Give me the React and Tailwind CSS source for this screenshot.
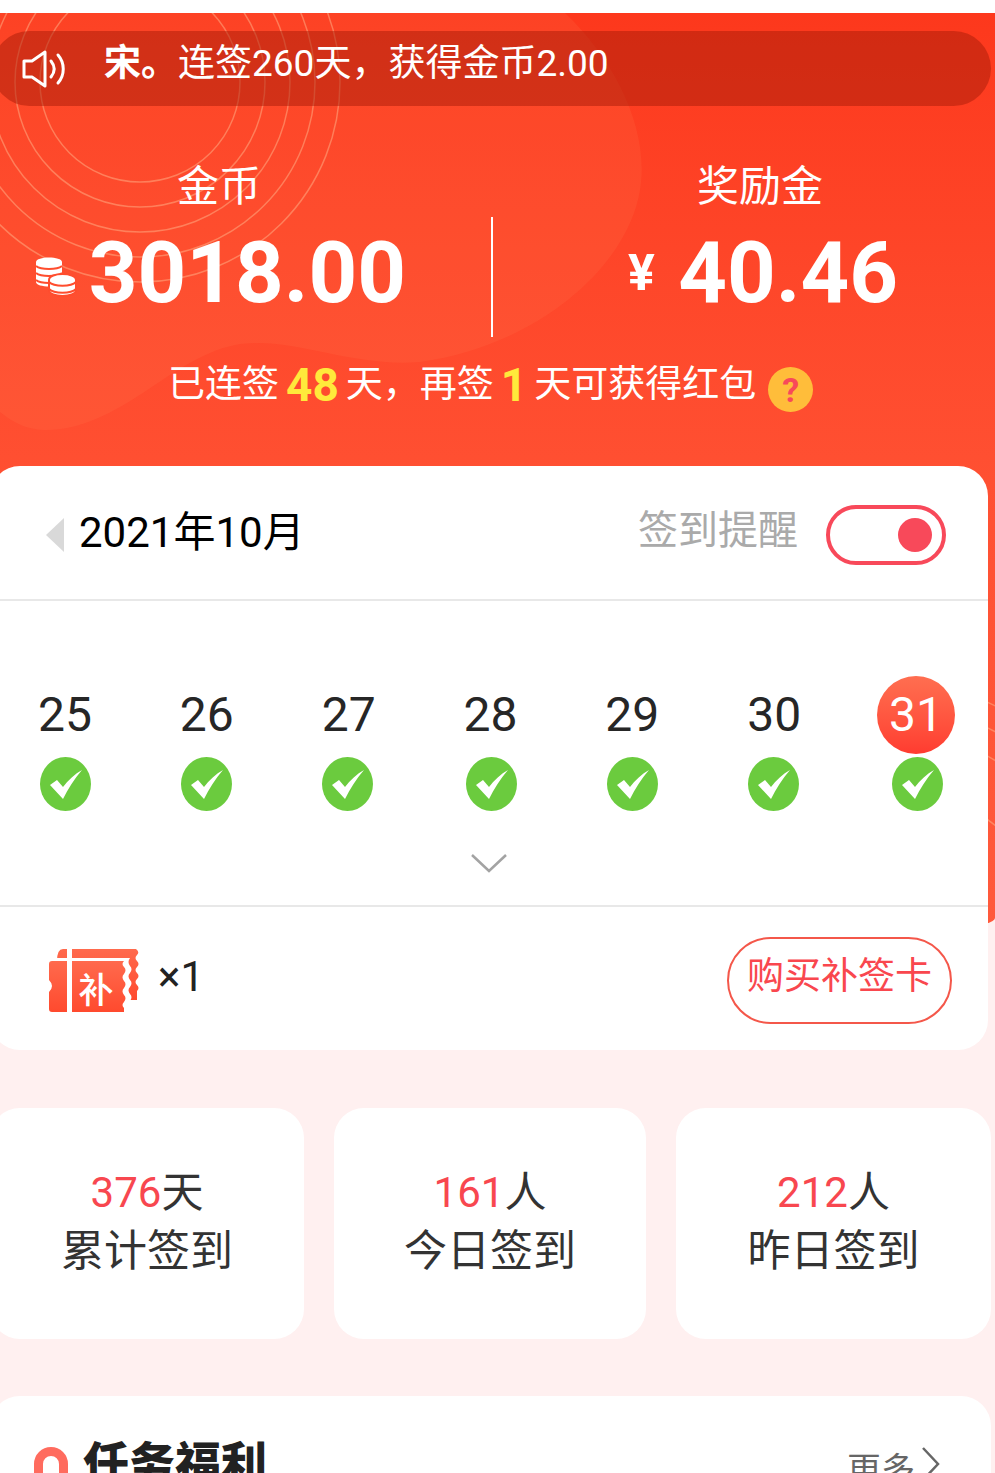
import React from 'react';

const days = [
    { d: 25, nudge: '' },
    { d: 26, nudge: '' },
    { d: 27, nudge: '-ml-[2px]' },
    { d: 28, nudge: 'ml-[2px]' },
    { d: 29, nudge: '' },
    { d: 30, nudge: '-ml-[2px]' },
    { d: 31, nudge: 'ml-[4px]' },
];

const stats = [
    { num: '376', unit: '天', label: '累计签到' },
    { num: '161', unit: '人', label: '今日签到' },
    { num: '212', unit: '人', label: '昨日签到' },
];

const FONT = "font-['Roboto','Noto_Sans_CJK_SC',sans-serif]";

// Red backdrop: blob and rings
function HeaderArt() {
    return (
        <div className="absolute left-0 top-[13px] w-full h-[935px] overflow-hidden rounded-b-[50%_30px] bg-gradient-to-b from-[#fd381c] via-[#ff5032] to-[#ff5a3c]">
            <svg width="995" height="935" viewBox="0 13 995 935" fill="none">
                <path
                    d="M0 13 H565 C615 60 650 130 640 190 C628 265 540 345 420 362 C350 368 290 335 235 345 C170 358 120 430 45 430 C25 430 10 420 0 412 Z"
                    fill="#ff8a5c"
                    fillOpacity="0.13"
                />
                {[100, 125, 150, 175, 200].map((r) => (
                    <circle key={r} cx="140" cy="82" r={r} stroke="#ffb48a" strokeOpacity="0.5" strokeWidth="1.5" />
                ))}
                {[328, 305, 280, 227].map((r) => (
                    <circle key={r} cx="850" cy="1000" r={r} stroke="#ffb48a" strokeOpacity="0.5" strokeWidth="1.5" />
                ))}
            </svg>
        </div>
    );
}

function Speaker() {
    return (
        <svg width="44" height="38" viewBox="0 0 44 38" fill="none" stroke="#fff" strokeWidth="3" strokeLinejoin="round" strokeLinecap="round">
            <path d="M2 11 H10 L23 2 V36 L10 27 H2 Z" />
            <path d="M29 11 C33 16 33 22 29 27" />
            <path d="M36 5 C43 13 43 25 36 33" />
        </svg>
    );
}

function Coins() {
    return (
        <svg width="42" height="40" viewBox="0 0 42 40" fill="none" className="mt-[8px]">
            <path d="M1 5 C1 -1 27 -1 27 5 V25 C27 31 1 31 1 25 Z" fill="#fff" />
            <path d="M1 9 C6 13 22 13 27 9 M1 16 C6 20 22 20 27 16 M1 23 C6 27 22 27 27 23" stroke="#ff4d2e" strokeWidth="2" />
            <path d="M14 23 C14 15 41 15 41 23 V33 C41 41 14 41 14 33 Z" fill="#fff" stroke="#ff4d2e" strokeWidth="2" />
            <path d="M14 25 C19 30 36 30 41 25 M14 32 C19 37 36 37 41 32" stroke="#ff4d2e" strokeWidth="2" />
        </svg>
    );
}

function Check() {
    return (
        <svg width="51" height="54" viewBox="0 0 51 54">
            <ellipse cx="25.5" cy="27" rx="25.5" ry="27" fill="#6bcb3e" />
            <path d="M10 28 L17 23 L23 30 C28 23 35 17 42 13 C34 22 28 32 23 42 Z" fill="#fff" />
        </svg>
    );
}

function Ticket() {
    return (
        <svg width="90" height="63" viewBox="0 0 90 63">
            <defs>
                <linearGradient id="ticketRed" x1="0" y1="0" x2="0" y2="1">
                    <stop offset="0" stopColor="#ff6a4d" />
                    <stop offset="1" stopColor="#ff4a2e" />
                </linearGradient>
            </defs>
            <path
                d="M8 12 Q8 0 14 0 H87 Q91 3 88 6 Q85 9 88 12 Q91 15 88 18 Q85 21 88 24 Q91 27 88 30 Q85 33 88 36 Q91 39 88 42 V51 H8 Z"
                fill="url(#ticketRed)"
            />
            <rect x="18" y="0" width="5" height="13" fill="#fff" />
            <path
                d="M-2 9 H81 Q78 13 81 17 Q84 20 81 24 Q78 27 81 31 Q84 34 81 38 Q78 41 81 45 Q84 48 81 52 Q78 55 81 59 V66 H-2 Z"
                fill="#fff"
            />
            <path
                d="M3 12 H75 Q72 15 75 18 Q78 21 75 25 Q72 28 75 32 Q78 35 75 39 Q72 42 75 46 Q78 49 75 53 Q72 56 75 59 V63 H3 Q0 63 0 60 V43 Q6 37 0 31 V15 Q0 12 3 12 Z"
                fill="url(#ticketRed)"
            />
            <rect x="18" y="12" width="5" height="51" fill="#fff" />
            <text x="47" y="54" textAnchor="middle" fontSize="35" fontWeight="500" fill="#fff" fontFamily="'Noto Sans CJK SC', sans-serif">补</text>
        </svg>
    );
}

export default function App() {
    return (
        <div className={`relative h-[1473px] w-[995px] overflow-hidden bg-[#fff0f0] ${FONT}`}>
            <div className="h-[13px] bg-white" />
            <HeaderArt />

            <div className="relative z-10">
                {/* Header */}
                <div className="h-[453px] pt-[18px] text-white">
                    <div className="-ml-[8px] flex h-[75px] w-[999px] items-center rounded-full bg-[#a81c08]/50 pl-[30px]">
                        <Speaker />
                        <div className="-mt-[10px] ml-[38px] flex items-center text-[37px]">
                            <span className="font-bold">宋。</span>
                            <span>连签260天，获得金币2.00</span>
                        </div>
                    </div>

                    <div className="mt-[54px] flex items-start">
                        <div className="w-[491px] pl-[35px] pr-[85px]">
                            <div className="mt-[1px] h-[52px] pr-[3px] text-center text-[42px] leading-[52px]">金币</div>
                            <div className="mt-[8px] flex h-[104px] items-center justify-between">
                                <Coins />
                                <span className="text-[85px] font-bold leading-none">3018.00</span>
                            </div>
                        </div>
                        <div className="mt-[57px] h-[120px] w-[2px] bg-white" />
                        <div className="flex-1 pl-[135px] pr-[97px]">
                            <div className="mt-[1px] h-[52px] pr-[6px] text-center text-[42px] leading-[52px]">奖励金</div>
                            <div className="mt-[8px] flex h-[104px] items-center justify-between">
                                <span className="text-[50px] font-bold leading-none">¥</span>
                                <span className="text-[85px] font-bold leading-none">40.46</span>
                            </div>
                        </div>
                    </div>

                    <div className="mt-[21px] flex items-center pl-[168px] text-[37px] leading-[50px]">
                        <span>已连签</span>
                        <span className="mx-[7px] text-[46px] font-bold text-[#ffe93b]">48</span>
                        <span>天，再签</span>
                        <span className="mx-[7px] text-[46px] font-bold text-[#ffe93b]">1</span>
                        <span>天可获得红包</span>
                        <span className="ml-[12px] mt-[9px] flex h-[45px] w-[45px] items-center justify-center rounded-full bg-[#ffbd3a] text-[34px] font-bold text-[#f8495a]">?</span>
                    </div>
                </div>

                {/* Calendar card */}
                <div className="-ml-[10px] w-[998px] rounded-[30px] bg-white">
                    <div className="flex h-[135px] items-center border-b-2 border-[#e8e8e8] pl-[56px] pr-[42px]">
                        <div className="mt-[4px] h-0 w-0 border-y-[17px] border-r-[18px] border-y-transparent border-r-[#d9d9d9]" />
                        <span className="ml-[15px] text-[42px] text-black">2021年10月</span>
                        <span className="-mt-[3px] ml-auto text-[40px] text-[#aaaaaa]">签到提醒</span>
                        <div className="ml-[28px] mt-[4px] flex h-[60px] w-[120px] items-center justify-end rounded-full border-4 border-[#f8495a] pr-[10px]">
                            <div className="h-[34px] w-[34px] rounded-full bg-[#f8495a]" />
                        </div>
                    </div>

                    <div className="h-[306px] border-b-2 border-[#e8e8e8] pt-[75px]">
                        <div className="flex justify-between pl-[36px] pr-[33px]">
                            {days.map(({ d, nudge }) => (
                                <div key={d} className="flex w-[78px] flex-col items-center">
                                    <div className={`flex h-[78px] w-[78px] items-center justify-center rounded-full text-[48px] ${d === 31 ? 'bg-gradient-to-b from-[#ff6e50] to-[#ff3b30] text-white' : 'text-[#262626]'}`}>
                                        {d}
                                    </div>
                                    <div className={`mt-[3px] ${nudge}`}><Check /></div>
                                </div>
                            ))}
                        </div>
                        <div className="mt-[42px] flex justify-center">
                            <svg width="36" height="20" viewBox="0 0 36 20" fill="none" stroke="#a3a3a3" strokeWidth="2.5">
                                <path d="M1 2 L18 18 L35 2" />
                            </svg>
                        </div>
                    </div>

                    <div className="flex h-[143px] items-start pl-[59px] pr-[36px]">
                        <div className="mt-[42px]"><Ticket /></div>
                        <span className="ml-[19px] mt-[45px] text-[42px] leading-[50px] text-[#222]">×1</span>
                        <div className="ml-auto mt-[30px] flex h-[87px] w-[225px] items-center justify-center rounded-full border-2 border-[#f4574a] pb-[8px] text-[37px] text-[#f9474e]">
                            购买补签卡
                        </div>
                    </div>
                </div>

                {/* Stats */}
                <div className="-ml-[10px] mt-[58px] grid grid-cols-[314px_312px_315px] gap-[30px]">
                    {stats.map((s) => (
                        <div key={s.label} className="flex h-[231px] flex-col items-center rounded-[30px] bg-white pt-[56px] text-[42px] leading-[58px] text-[#333]">
                            <div><span className="text-[#f8474f]">{s.num}</span>{s.unit}</div>
                            <div className="text-[43px]">{s.label}</div>
                        </div>
                    ))}
                </div>

                {/* Task card, runs past the bottom of the window */}
                <div className="-ml-[10px] mt-[57px] flex h-[200px] w-[1001px] items-start rounded-[30px] bg-white pl-[44px] pr-[50px] pt-[32px]">
                    <div className="mt-[19px] h-[60px] w-[34px] rounded-full border-[9px] border-[#ff6b5e]" />
                    <span className="ml-[15px] mt-[8px] text-[46px] font-black leading-[56px] text-[#222]">任务福利</span>
                    <span className="ml-auto mt-[18px] text-[34px] leading-[48px] text-[#666]">更多</span>
                    <svg width="20" height="36" viewBox="0 0 20 36" fill="none" stroke="#666" strokeWidth="2.5" className="ml-[6px] mt-[18px]">
                        <path d="M2 2 L17 18 L2 34" />
                    </svg>
                </div>
            </div>
        </div>
    );
}
